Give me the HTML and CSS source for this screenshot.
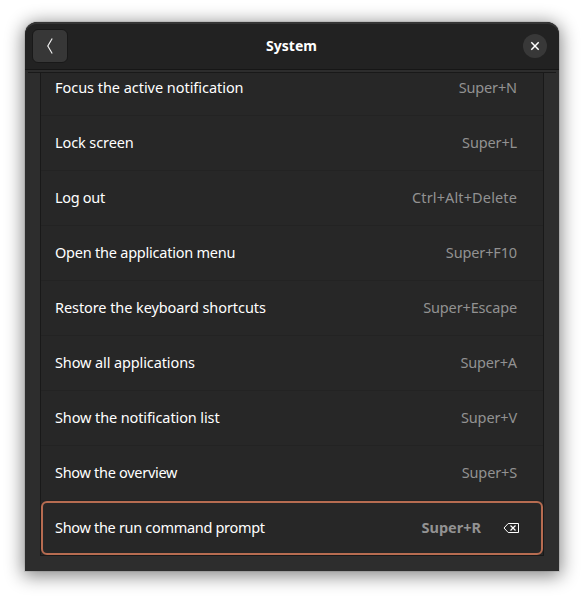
FILE: index.html
```html
<!DOCTYPE html>
<html lang="en">
<head>
<meta charset="utf-8">
<title>System</title>
<link rel="stylesheet" href="styles.css">
</head>
<body>
<main class="window">
  <header class="header">
    <button class="back" aria-label="Back"><svg width="8" height="18" viewBox="0 0 8 18"><path d="M6.2 1.5 1.8 9l4.4 7.5" fill="none" stroke="#eee" stroke-width="1.2"/></svg></button>
    <h1 class="title">System</h1>
    <button class="close" aria-label="Close"><svg width="10" height="10" viewBox="0 0 10 10"><path d="M1.3 1.3 8.7 8.7M8.7 1.3 1.3 8.7" fill="none" stroke="#fff" stroke-width="1.5"/></svg></button>
  </header>
  <div class="edge"></div>
  <ul class="list">
    <li class="row first"><span class="name n1">Focus the active notification</span><span class="key">Super+N</span></li>
    <li class="row"><span class="name n2">Lock screen</span><span class="key">Super+L</span></li>
    <li class="row"><span class="name n3">Log out</span><span class="key k3">Ctrl+Alt+Delete</span></li>
    <li class="row"><span class="name n4">Open the application menu</span><span class="key">Super+F10</span></li>
    <li class="row"><span class="name n5">Restore the keyboard shortcuts</span><span class="key">Super+Escape</span></li>
    <li class="row"><span class="name n6">Show all applications</span><span class="key">Super+A</span></li>
    <li class="row"><span class="name n7">Show the notification list</span><span class="key">Super+V</span></li>
    <li class="row"><span class="name n8">Show the overview</span><span class="key">Super+S</span></li>
    <li class="row selected"><span class="name n9">Show the run command prompt</span><span class="key bold">Super+R</span><svg class="reset" width="16" height="12" viewBox="0 0 16 12"><path d="M5.2 1.5H15.5V10.5H5.2L1 6Z" fill="none" stroke="#fff"/><path d="m7.5 3.5 5 5m0-5-5 5" fill="none" stroke="#fff" stroke-width="1.2"/></svg></li>
  </ul>
</main>
</body>
</html>
```
FILE: styles.css
```css
* { box-sizing: border-box; }
body { margin: 0; padding: 22px 25px 28px; height: 599px; background: #fff; overflow: hidden; font: 14.5px/20px "Noto Sans", sans-serif; color: #fff; }
.window { height: 549px; background: #2d2d2d; border-radius: 12px 12px 0 0; overflow: hidden; box-shadow: 0 3px 18px 2px rgba(0,0,0,.48), 0 0 0 1px rgba(0,0,0,.08); }
.header { height: 48px; display: flex; align-items: center; justify-content: space-between; padding: 0 12px 0 7px; background: #222; border-bottom: 1px solid #161616; border-radius: 12px 12px 0 0; box-shadow: inset 0 2px #353535; }
.back, .close { display: grid; place-items: center; padding: 0; border: 0; }
.back { width: 36px; height: 34px; border: 1px solid #191919; border-radius: 6px; background: #373737; }
.close { width: 24px; height: 24px; border-radius: 50%; background: #383838; }
.title { margin: 0; font-size: 14px; line-height: 20px; font-weight: 700; padding-right: 8px; }
.edge { height: 3px; margin: 0 3px; border-bottom: 1px solid #191919; }
.list { list-style: none; margin: 0 15px; padding: 0; border: 1px solid #191919; border-top: 0; background: #272727; }
.row { height: 55px; display: flex; align-items: center; padding: 0 26px 2px 14px; border-bottom: 1px solid #232323; }
.first { height: 43px; align-items: flex-start; padding-top: 4px; }
.name { flex: 1; white-space: nowrap; }
.n1 { letter-spacing: -.04px; }
.n2 { letter-spacing: -.1px; }
.n3 { letter-spacing: -.3px; }
.n4 { letter-spacing: -.23px; }
.n5 { letter-spacing: -.08px; }
.n6 { letter-spacing: -.11px; }
.n7 { letter-spacing: -.11px; }
.n8 { letter-spacing: -.29px; }
.n9 { letter-spacing: -.31px; }
.key { color: #929292; white-space: nowrap; letter-spacing: -.14px; }
.k3 { letter-spacing: .13px; }
.selected { height: 54px; padding: 0 22px 2px 12px; border: 2px solid #b76c51; border-radius: 6px; }
.bold { font-weight: 700; letter-spacing: 0; }
.reset { margin-left: 22px; position: relative; top: 1px; }
```
